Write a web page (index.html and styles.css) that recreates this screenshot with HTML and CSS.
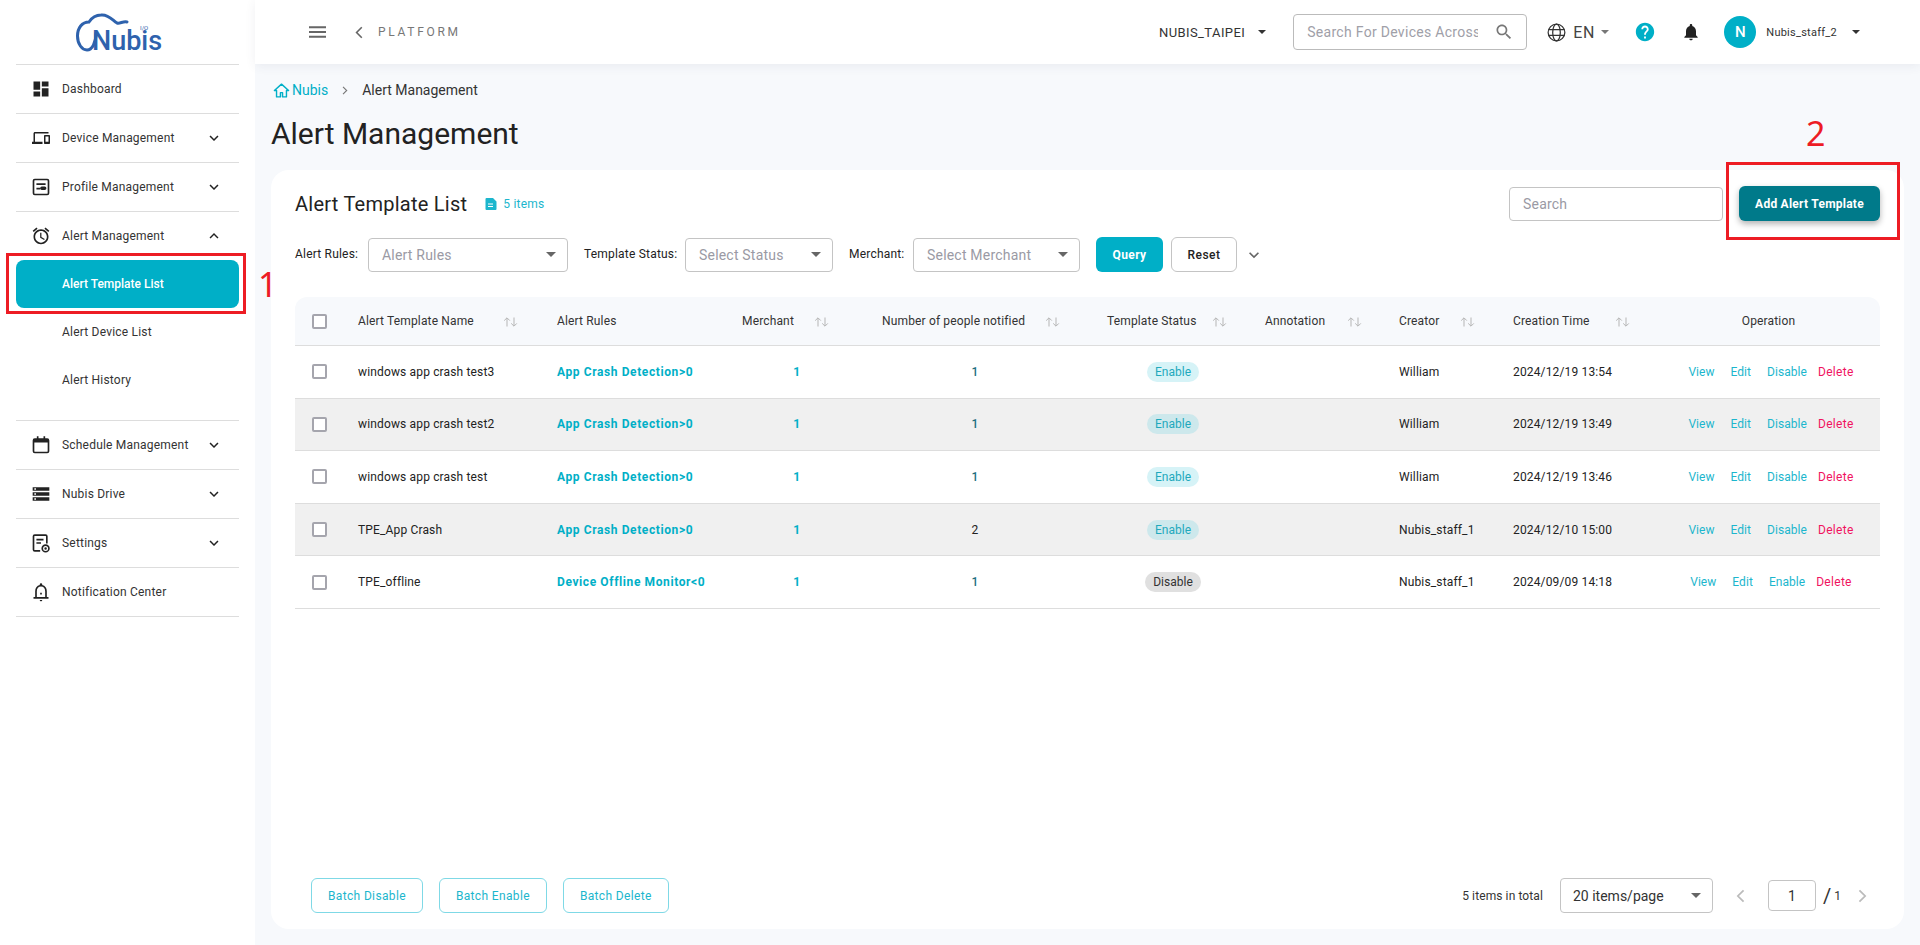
FILE: index.html
```html
<!DOCTYPE html>
<html lang="en">
<head>
<meta charset="utf-8">
<title>Alert Management</title>
<link rel="stylesheet" href="styles.css">
</head>
<body>
<svg class="defs" xmlns="http://www.w3.org/2000/svg">
  <symbol id="chev-down" viewBox="0 0 24 24"><path d="M7.41 8.59 12 13.17l4.59-4.58L18 10l-6 6-6-6z"/></symbol>
  <symbol id="chev-up" viewBox="0 0 24 24"><path d="M7.41 15.41 12 10.83l4.59 4.58L18 14l-6-6-6 6z"/></symbol>
  <symbol id="caret" viewBox="0 0 10 5"><path d="M0 0h10L5 5z"/></symbol>
  <symbol id="sort" viewBox="0 0 16 10"><path d="M4 9.500V1M1.200 3.600 4 .8l2.800 2.800M11 .5V9M8.200 6.400 11 9.200l2.800-2.800" fill="none" stroke="currentColor" stroke-width="1"/></symbol>
  <symbol id="left" viewBox="0 0 10 16"><path d="M8.500 1.500 2 8l6.500 6.500" fill="none" stroke="currentColor" stroke-width="2"/></symbol>
  <symbol id="right" viewBox="0 0 10 16"><path d="M1.500 1.500 8 8l-6.500 6.500" fill="none" stroke="currentColor" stroke-width="2"/></symbol>
</svg>

<div class="app">
  <aside class="sidebar">
    <div class="logo">
      <svg class="logo-cloud" viewBox="0 0 54 40"><path d="M51 9C47 8 44 11 41 10 37 8 33 1 25 2 19 2 15 6 13 9 6 9 1.500 15 1.500 23 1.500 31 6 37 11 37 16 37 20 30 20 20" fill="none" stroke="#2e62ad" stroke-width="3" stroke-linecap="round"/></svg>
      <span class="logo-text">Nubis</span>
      <span class="logo-io">I/O</span>
    </div>
    <nav class="nav">
      <a class="nav-item">
        <svg class="nav-icon" viewBox="0 0 24 24"><path d="M3 13h8V3H3v10zm0 8h8v-6H3v6zm10 0h8V11h-8v10zm0-18v6h8V3h-8z"/></svg>
        <span class="nav-label">Dashboard</span>
      </a>
      <a class="nav-item">
        <svg class="nav-icon nav-icon-wide" viewBox="0 0 24 24"><path d="M4 6h18V4H4c-1.100 0-2 .9-2 2v11H0v3h14v-3H4V6zm19 2h-6c-.55 0-1 .45-1 1v10c0 .55.45 1 1 1h6c.55 0 1-.45 1-1V9c0-.55-.45-1-1-1zm-1 9h-4v-7h4v7z"/></svg>
        <span class="nav-label">Device Management</span>
        <svg class="nav-chev"><use href="#chev-down"/></svg>
      </a>
      <a class="nav-item">
        <svg class="nav-icon" viewBox="0 0 24 24"><path fill-rule="evenodd" d="M4.500 2h15A2.500 2.500 0 0 1 22 4.500v15a2.500 2.500 0 0 1-2.500 2.500h-15A2.500 2.500 0 0 1 2 19.500v-15A2.500 2.500 0 0 1 4.500 2zm0 2a.5.5 0 0 0-.5.5v15a.5.5 0 0 0 .5.5h15a.5.5 0 0 0 .5-.5v-15a.5.5 0 0 0-.5-.5zM6.500 7.500h11v2h-11zm0 5.500H11v2H6.500zm6.500-1.500h3.500a2 2 0 0 1 0 4H13a2 2 0 0 1 0-4z"/></svg>
        <span class="nav-label">Profile Management</span>
        <svg class="nav-chev"><use href="#chev-down"/></svg>
      </a>
      <div class="nav-group">
        <a class="nav-item nav-item-open">
          <svg class="nav-icon" viewBox="0 0 24 24"><path d="M22 5.720l-4.600-3.860-1.290 1.530 4.600 3.860L22 5.720zM7.880 3.390 6.600 1.860 2 5.710l1.290 1.530 4.590-3.850zM12.500 8H11v6l4.750 2.850.75-1.230-4-2.370V8zM12 4c-4.970 0-9 4.030-9 9s4.030 9 9 9 9-4.030 9-9-4.030-9-9-9zm0 16c-3.870 0-7-3.130-7-7s3.130-7 7-7 7 3.130 7 7-3.130 7-7 7z"/></svg>
          <span class="nav-label">Alert Management</span>
          <svg class="nav-chev"><use href="#chev-up"/></svg>
        </a>
        <a class="nav-sub nav-sub-active">Alert Template List</a>
        <a class="nav-sub">Alert Device List</a>
        <a class="nav-sub">Alert History</a>
      </div>
      <a class="nav-item">
        <svg class="nav-icon" viewBox="0 0 24 24"><path d="M7 1.500h2V4h6V1.500h2V4h2.500A2.500 2.500 0 0 1 22 6.500v13a2.500 2.500 0 0 1-2.500 2.500h-15A2.500 2.500 0 0 1 2 19.500v-13A2.500 2.500 0 0 1 4.500 4H7zM4 9v10.500a.5.5 0 0 0 .5.5h15a.5.5 0 0 0 .5-.5V9z"/></svg>
        <span class="nav-label">Schedule Management</span>
        <svg class="nav-chev"><use href="#chev-down"/></svg>
      </a>
      <a class="nav-item">
        <svg class="nav-icon" viewBox="0 0 24 24"><path d="M2 20h20v-4H2v4zm2-3h2v2H4v-2zM2 4v4h20V4H2zm4 3H4V5h2v2zm-4 7h20v-4H2v4zm2-3h2v2H4v-2z"/></svg>
        <span class="nav-label">Nubis Drive</span>
        <svg class="nav-chev"><use href="#chev-down"/></svg>
      </a>
      <a class="nav-item">
        <svg class="nav-icon" viewBox="0 0 24 24"><path d="M4.500 1.500h13A2.500 2.500 0 0 1 20 4v8.500h-2V4a.5.5 0 0 0-.5-.5h-13A.5.5 0 0 0 4 4v16a.5.5 0 0 0 .5.5H11v2H4.500A2.500 2.500 0 0 1 2 20V4a2.500 2.500 0 0 1 2.500-2.500zM6.500 7H15v2H6.500zm0 4H12v2H6.500zM17.500 13.500a5 5 0 1 1 0 10 5 5 0 0 1 0-10zm0 2a3 3 0 1 0 0 6 3 3 0 0 0 0-6zm0 1.500a1.500 1.500 0 1 1 0 3 1.500 1.500 0 0 1 0-3z"/></svg>
        <span class="nav-label">Settings</span>
        <svg class="nav-chev"><use href="#chev-down"/></svg>
      </a>
      <a class="nav-item">
        <svg class="nav-icon" viewBox="0 0 24 24"><path d="M12 1.500a1.500 1.500 0 0 1 1.500 1.500v.7C17 4.600 19 7.500 19 11v7h2v2H3v-2h2v-7c0-3.500 2-6.400 5.500-7.300V3A1.500 1.500 0 0 1 12 1.500zM7 18h10v-7c0-3-2-5.500-5-5.500S7 8 7 11zm3.500 3.500h3c0 1-.7 1.500-1.500 1.500s-1.500-.5-1.500-1.500zM11 13h2v2h-2z"/></svg>
        <span class="nav-label">Notification Center</span>
      </a>
    </nav>
  </aside>

  <div class="main">
    <header class="topbar">
      <div class="topbar-left">
        <svg class="tb-menu" viewBox="0 0 18 12"><path d="M0 0h18v2H0zM0 5h18v2H0zM0 10h18v2H0z"/></svg>
        <svg class="tb-back"><use href="#left"/></svg>
        <span class="tb-platform">PLATFORM</span>
      </div>
      <div class="topbar-right">
        <span class="tb-merchant">NUBIS_TAIPEI</span>
        <svg class="tb-caret tb-caret-merchant"><use href="#caret"/></svg>
        <div class="tb-search">
          <span class="tb-search-text">Search For Devices Across</span>
          <svg class="tb-search-icon" viewBox="0 0 24 24"><path d="M15.500 14h-.79l-.28-.27C15.410 12.590 16 11.110 16 9.500 16 5.910 13.090 3 9.500 3S3 5.910 3 9.500 5.910 16 9.500 16c1.610 0 3.090-.59 4.230-1.570l.27.28v.79l5 4.990L20.490 19l-4.990-5zm-6 0C7.010 14 5 11.990 5 9.500S7.010 5 9.500 5 14 7.010 14 9.500 11.990 14 9.500 14z"/></svg>
        </div>
        <svg class="tb-globe" viewBox="0 0 20 20"><g fill="none" stroke="#333" stroke-width="1.300"><circle cx="10" cy="10" r="8.800"/><ellipse cx="10" cy="10" rx="4" ry="8.800"/><path d="M1.500 7h17M1.500 13h17"/></g></svg>
        <span class="tb-lang">EN</span>
        <svg class="tb-caret tb-caret-grey"><use href="#caret"/></svg>
        <svg class="tb-help" viewBox="0 0 24 24"><path d="M12 2C6.480 2 2 6.480 2 12s4.480 10 10 10 10-4.480 10-10S17.520 2 12 2zm1 17h-2v-2h2v2zm2.070-7.750-.9.920C13.450 12.900 13 13.500 13 15h-2v-.5c0-1.100.45-2.100 1.170-2.830l1.240-1.260c.37-.36.59-.86.59-1.410 0-1.100-.9-2-2-2s-2 .9-2 2H8c0-2.210 1.790-4 4-4s4 1.790 4 4c0 .88-.36 1.680-.93 2.250z"/></svg>
        <svg class="tb-bell" viewBox="0 0 24 24"><path d="M12 22c1.100 0 2-.9 2-2h-4c0 1.100.89 2 2 2zm6-6v-5c0-3.070-1.640-5.640-4.500-6.320V4c0-.83-.67-1.500-1.500-1.500s-1.500.67-1.500 1.500v.68C7.630 5.360 6 7.920 6 11v5l-2 2v1h16v-1l-2-2z"/></svg>
        <span class="tb-avatar">N</span>
        <span class="tb-user">Nubis_staff_2</span>
        <svg class="tb-caret tb-caret-user"><use href="#caret"/></svg>
      </div>
    </header>

    <div class="content">
      <div class="crumbs">
        <svg class="crumb-home" viewBox="0 0 24 24"><path d="M12 3 2 12h3v9h5.500v-6h3v6H19v-9h3z" fill="none" stroke="#00afc7" stroke-width="2" stroke-linejoin="round"/></svg>
        <span class="crumb-link">Nubis</span>
        <svg class="crumb-sep"><use href="#right"/></svg>
        <span class="crumb-current">Alert Management</span>
      </div>
      <h1 class="page-title">Alert Management</h1>

      <section class="card">
        <div class="card-head">
          <h2 class="card-title">Alert Template List</h2>
          <svg class="doc-icon" viewBox="0 0 12 12"><path d="M1.500 0H8l3.500 3.500V11a1 1 0 0 1-1 1h-9a1 1 0 0 1-1-1V1a1 1 0 0 1 1-1zM3 5.500v1h5v-1zM3 8v1h5V8z" fill-rule="evenodd"/></svg>
          <span class="doc-count">5 items</span>
          <div class="card-actions">
            <div class="field field-search"><span class="placeholder">Search</span></div>
            <button class="btn-add">Add Alert Template</button>
          </div>
        </div>

        <div class="filters">
          <label class="filter-label lbl-rules">Alert Rules:</label>
          <div class="field field-rules"><span class="placeholder">Alert Rules</span><svg class="select-caret"><use href="#caret"/></svg></div>
          <label class="filter-label filter-next lbl-status">Template Status:</label>
          <div class="field field-status"><span class="placeholder">Select Status</span><svg class="select-caret"><use href="#caret"/></svg></div>
          <label class="filter-label filter-next lbl-merchant">Merchant:</label>
          <div class="field field-merchant"><span class="placeholder">Select Merchant</span><svg class="select-caret"><use href="#caret"/></svg></div>
          <button class="btn-query">Query</button>
          <button class="btn-reset">Reset</button>
          <svg class="filter-more"><use href="#chev-down"/></svg>
        </div>

        <div class="table">
          <div class="row row-head">
            <div class="cell cell-check"><span class="check"></span></div>
            <div class="cell hd-name">Alert Template Name<svg class="sort s-name"><use href="#sort"/></svg></div>
            <div class="cell hd-rules">Alert Rules</div>
            <div class="cell hd-merchant">Merchant<svg class="sort s-merchant"><use href="#sort"/></svg></div>
            <div class="cell hd-people">Number of people notified<svg class="sort s-people"><use href="#sort"/></svg></div>
            <div class="cell hd-status">Template Status<svg class="sort s-status"><use href="#sort"/></svg></div>
            <div class="cell hd-annot">Annotation<svg class="sort s-annot"><use href="#sort"/></svg></div>
            <div class="cell hd-creator">Creator<svg class="sort s-creator"><use href="#sort"/></svg></div>
            <div class="cell hd-time">Creation Time<svg class="sort s-time"><use href="#sort"/></svg></div>
            <div class="cell cell-center">Operation</div>
          </div>

          <div class="row">
            <div class="cell cell-check"><span class="check"></span></div>
            <div class="cell cell-pad">windows app crash test3</div>
            <div class="cell cell-pad link-strong">App Crash Detection&gt;0</div>
            <div class="cell cell-center link-strong">1</div>
            <div class="cell cell-center link-num">1</div>
            <div class="cell cell-center"><span class="badge badge-on">Enable</span></div>
            <div class="cell"></div>
            <div class="cell cell-pad">William</div>
            <div class="cell cell-pad">2024/12/19 13:54</div>
            <div class="cell cell-center ops"><a class="op">View</a><a class="op">Edit</a><a class="op">Disable</a><a class="op op-del">Delete</a></div>
          </div>
          <div class="row row-alt">
            <div class="cell cell-check"><span class="check"></span></div>
            <div class="cell cell-pad">windows app crash test2</div>
            <div class="cell cell-pad link-strong">App Crash Detection&gt;0</div>
            <div class="cell cell-center link-strong">1</div>
            <div class="cell cell-center link-num">1</div>
            <div class="cell cell-center"><span class="badge badge-on">Enable</span></div>
            <div class="cell"></div>
            <div class="cell cell-pad">William</div>
            <div class="cell cell-pad">2024/12/19 13:49</div>
            <div class="cell cell-center ops"><a class="op">View</a><a class="op">Edit</a><a class="op">Disable</a><a class="op op-del">Delete</a></div>
          </div>
          <div class="row">
            <div class="cell cell-check"><span class="check"></span></div>
            <div class="cell cell-pad">windows app crash test</div>
            <div class="cell cell-pad link-strong">App Crash Detection&gt;0</div>
            <div class="cell cell-center link-strong">1</div>
            <div class="cell cell-center link-num">1</div>
            <div class="cell cell-center"><span class="badge badge-on">Enable</span></div>
            <div class="cell"></div>
            <div class="cell cell-pad">William</div>
            <div class="cell cell-pad">2024/12/19 13:46</div>
            <div class="cell cell-center ops"><a class="op">View</a><a class="op">Edit</a><a class="op">Disable</a><a class="op op-del">Delete</a></div>
          </div>
          <div class="row row-alt">
            <div class="cell cell-check"><span class="check"></span></div>
            <div class="cell cell-pad">TPE_App Crash</div>
            <div class="cell cell-pad link-strong">App Crash Detection&gt;0</div>
            <div class="cell cell-center link-strong">1</div>
            <div class="cell cell-center">2</div>
            <div class="cell cell-center"><span class="badge badge-on">Enable</span></div>
            <div class="cell"></div>
            <div class="cell cell-pad">Nubis_staff_1</div>
            <div class="cell cell-pad">2024/12/10 15:00</div>
            <div class="cell cell-center ops"><a class="op">View</a><a class="op">Edit</a><a class="op">Disable</a><a class="op op-del">Delete</a></div>
          </div>
          <div class="row">
            <div class="cell cell-check"><span class="check"></span></div>
            <div class="cell cell-pad">TPE_offline</div>
            <div class="cell cell-pad link-strong">Device Offline Monitor&lt;0</div>
            <div class="cell cell-center link-strong">1</div>
            <div class="cell cell-center link-num">1</div>
            <div class="cell cell-center"><span class="badge badge-off">Disable</span></div>
            <div class="cell"></div>
            <div class="cell cell-pad">Nubis_staff_1</div>
            <div class="cell cell-pad">2024/09/09 14:18</div>
            <div class="cell cell-center ops"><a class="op">View</a><a class="op">Edit</a><a class="op">Enable</a><a class="op op-del">Delete</a></div>
          </div>
        </div>

        <div class="card-foot">
          <button class="btn-batch">Batch Disable</button>
          <button class="btn-batch">Batch Enable</button>
          <button class="btn-batch">Batch Delete</button>
          <div class="pager">
            <span class="pager-total">5 items in total</span>
            <div class="field field-size"><span class="size-text">20 items/page</span><svg class="select-caret"><use href="#caret"/></svg></div>
            <svg class="pager-arrow pager-prev"><use href="#left"/></svg>
            <div class="pager-input">1</div>
            <span class="pager-slash">/</span>
            <span class="pager-pages">1</span>
            <svg class="pager-arrow pager-next"><use href="#right"/></svg>
          </div>
        </div>
      </section>
    </div>
  </div>

  <div class="mark mark-1"></div>
  <div class="mark mark-2"></div>
  <span class="mark-num mark-num-1">1</span>
  <span class="mark-num mark-num-2">2</span>
</div>
</body>
</html>
```

FILE: styles.css
```css
* { box-sizing: border-box; }
html, body { margin: 0; height: 100%; }
body { font-family: Roboto, "Liberation Sans", Arial, sans-serif; font-size: 12px; color: #333; background: #f7f9fc; overflow: hidden; }
.defs { display: none; }
button { font-family: inherit; cursor: pointer; }
h1, h2 { margin: 0; font-weight: 400; }

.app { position: relative; display: flex; width: 1920px; height: 945px; }

/* Sidebar */
.sidebar { width: 255px; flex: none; background: #fff; padding: 0 16px; }
.logo { position: relative; height: 65px; border-bottom: 1px solid #ddd; }
.logo-cloud { position: absolute; left: 60px; top: 13px; width: 54px; height: 40px; }
.logo-text { position: absolute; left: 76px; top: 32px; font-size: 27px; line-height: 18px; font-weight: 500; color: #2e62ad; }
.logo-io { position: absolute; left: 124px; top: 25px; font-size: 6px; line-height: 6px; color: #2e62ad; }
.nav-item { display: flex; align-items: center; height: 49px; padding-left: 15px; border-bottom: 1px solid #ddd; }
.nav-item-open { border-bottom: 0; height: 48px; }
.nav-icon { width: 20px; height: 20px; flex: none; fill: #222; }
.nav-icon-wide { width: 18px; height: 18px; margin-left: 1px; margin-right: 1px; }
.nav-label { margin-left: 11px; font-size: 12px; letter-spacing: 0.2px; color: #333; }
.nav-chev { width: 18px; height: 18px; margin-left: auto; margin-right: 16px; fill: #222; }
.nav-group { border-bottom: 1px solid #ddd; padding-bottom: 16px; }
.nav-sub { display: block; height: 48px; line-height: 49px; padding-left: 46px; font-size: 12px; letter-spacing: 0.2px; border-radius: 8px; color: #333; }
.nav-sub-active { background: #00afc7; color: #fff; font-weight: 500; letter-spacing: 0; line-height: 48px; }

/* Main column */
.main { flex: 1; min-width: 0; display: flex; flex-direction: column; }
.topbar { height: 64px; flex: none; background: #fff; box-shadow: 0 2px 10px rgba(60, 70, 90, 0.08); display: flex; align-items: center; justify-content: space-between; padding-left: 54px; padding-right: 60px; }
.topbar-left, .topbar-right { display: flex; align-items: center; }
.tb-menu { width: 17px; height: 12px; fill: #666; }
.tb-back { width: 8px; height: 13px; margin-left: 29px; color: #666; }
.tb-platform { margin-left: 15px; font-size: 12px; letter-spacing: 2.7px; color: #777; }
.tb-merchant { font-size: 13px; letter-spacing: 0.4px; color: #333; }
.tb-caret { width: 8px; height: 4px; margin-left: 15px; fill: #333; }
.tb-caret-merchant { margin-left: 13px; }
.tb-search { display: flex; align-items: center; width: 234px; height: 36px; margin-left: 27px; padding: 0 12px 0 13px; border: 1px solid #bbb; border-radius: 4px; background: #fff; }
.tb-search-text { width: 171px; overflow: hidden; white-space: nowrap; font-size: 14px; color: #a0a0a8; letter-spacing: 0.3px; }
.tb-search-icon { width: 20px; height: 20px; margin-left: auto; fill: #777; }
.tb-globe { width: 19px; height: 19px; margin-left: 20px; }
.tb-lang { margin-left: 7px; font-size: 16px; letter-spacing: 0.8px; color: #444; }
.tb-caret-grey { margin-left: 6px; fill: #777; }
.tb-help { width: 22px; height: 22px; margin-left: 25px; fill: #00afc7; }
.tb-bell { width: 20px; height: 20px; margin-left: 25px; fill: #222; }
.tb-avatar { width: 32px; height: 32px; margin-left: 23px; border-radius: 50%; background: #00afc7; color: #fff; font-size: 15px; font-weight: 500; display: flex; align-items: center; justify-content: center; }
.tb-user { margin-left: 10px; font-size: 11px; letter-spacing: 0.25px; color: #333; }
.tb-caret-user { margin-left: 15px; }

.content { flex: 1; min-height: 0; display: flex; flex-direction: column; padding: 0 16px 16px; }
.crumbs { display: flex; align-items: center; height: 18px; margin-top: 17px; font-size: 14px; padding-left: 2px; }
.crumb-home { width: 17px; height: 17px; flex: none; }
.crumb-link { margin-left: 2px; color: #00afc7; }
.crumb-sep { width: 6px; height: 9px; margin-left: 14px; color: #777; }
.crumb-current { margin-left: 14px; color: #333; }
.page-title { margin-top: 15px; font-size: 30px; line-height: 40px; color: #222; }
.card { flex: 1; min-height: 0; margin-top: 16px; background: #fff; border-radius: 18px; padding: 16px 24px; display: flex; flex-direction: column; }
.card-head { display: flex; align-items: center; height: 35px; }
.card-title { font-size: 20px; letter-spacing: 0.25px; color: #222; }
.doc-icon { width: 12px; height: 12px; margin-left: 18px; fill: #1cb6cd; }
.doc-count { margin-left: 6px; font-size: 12px; letter-spacing: 0.2px; color: #1cb6cd; }
.card-actions { margin-left: auto; display: flex; align-items: center; }
.field { display: flex; align-items: center; height: 34px; padding: 0 11px 0 13px; background: #fff; border: 1px solid #c4c4c4; border-radius: 4px; }
.placeholder { font-size: 14px; color: #9a9aa4; letter-spacing: 0.2px; white-space: nowrap; }
.field-search { width: 214px; }
.btn-add { width: 141px; height: 35px; margin-left: 16px; border: 0; border-radius: 6px; background: #007a8a; color: #fff; font-size: 12px; font-weight: 700; letter-spacing: 0.25px; box-shadow: 0 3px 6px rgba(0, 0, 0, 0.3); }

.filters { display: flex; align-items: center; height: 35px; margin-top: 16px; }
.filter-label { flex: none; font-size: 12px; letter-spacing: 0.2px; color: #222; transform: translateY(-1px); white-space: nowrap; }
.lbl-rules { width: 65px; }
.lbl-status { width: 93px; }
.lbl-merchant { width: 56px; }
.filter-next { margin-left: 16px; }
.filters .field { margin-left: 8px; }
.field-rules { width: 200px; }
.field-status { width: 148px; }
.field-merchant { width: 167px; }
.select-caret { width: 10px; height: 5px; margin-left: auto; fill: #666; }
.btn-query { width: 67px; height: 35px; margin-left: 16px; border: 0; border-radius: 6px; background: #00afc7; color: #fff; font-size: 12px; font-weight: 700; letter-spacing: 0.4px; }
.btn-reset { width: 66px; height: 35px; margin-left: 8px; background: #fff; border: 1px solid #c4c4c4; border-radius: 6px; color: #222; font-size: 12px; font-weight: 500; letter-spacing: 0.5px; }
.filter-more { width: 20px; height: 20px; margin-left: 7px; fill: #666; }

/* Table */
.table { margin-top: 25px; letter-spacing: 0.15px; }
.row { display: grid; grid-template-columns: 47px 199px 185px 142px 214px 182px 119px 114px 160px 223px; height: 52.6px; border-bottom: 1px solid #ddd; color: #222; }
.row-head { height: 49px; background: #f7f9fc; border-radius: 12px 12px 0 0; color: #333; }
.row-alt { background: #f0f0f0; }
.cell { display: flex; align-items: center; position: relative; min-width: 0; white-space: nowrap; }
.cell-check { justify-content: flex-start; padding-left: 17px; }
.check { width: 15px; height: 15px; background: #fff; border: 2px solid #a5a5ad; border-radius: 2px; }
.cell-pad { padding-left: 16px; }
.cell-center { justify-content: center; }
.link-strong { color: #00afc7; font-weight: 700; letter-spacing: 0.6px; }
.link-num { color: #1f6f80; font-weight: 500; }
.hd-name, .hd-rules, .hd-merchant, .hd-creator, .hd-time { padding-left: 16px; }
.hd-people { padding-left: 14px; }
.hd-status { padding-left: 25px; }
.hd-annot { padding-left: 1px; }
.sort { width: 16px; height: 10px; color: #b5b5b5; flex: none; margin-top: 2px; }
.s-name { margin-left: 29px; }
.s-merchant { margin-left: 20px; }
.s-people { margin-left: 20px; }
.s-status { margin-left: 16px; }
.s-annot { margin-left: 22px; }
.s-creator { margin-left: 21px; }
.s-time { margin-left: 25px; }
.badge { display: inline-flex; align-items: center; height: 20px; padding: 0 8px; border-radius: 10px; font-size: 12px; letter-spacing: 0; }
.badge-on { background: #d6f3f7; color: #1fa9bd; }
.row-alt .badge-on { background: #cde8ec; }
.badge-off { background: #e0e0e0; color: #333; }
.ops { letter-spacing: 0.05px; padding-left: 5px; }
.op { color: #1cb6cd; margin: 0 8px; }
.op-del { color: #f0135f; margin-left: 3px; letter-spacing: 0.3px; }

/* Footer */
.card-foot { margin-top: auto; display: flex; align-items: center; height: 35px; padding-left: 16px; }
.btn-batch { height: 35px; padding: 0 16px; margin-right: 16px; background: #fff; border: 1px solid #7fd9e6; border-radius: 6px; color: #1cb6cd; font-size: 12px; letter-spacing: 0.35px; }
.pager { margin-left: auto; display: flex; align-items: center; }
.pager-total { font-size: 12px; letter-spacing: 0.1px; color: #333; }
.field-size { width: 153px; height: 35px; margin-left: 17px; padding-left: 12px; }
.size-text { font-size: 14px; color: #333; }
.pager-arrow { width: 9px; height: 14px; color: #bbb; }
.pager-prev { margin-left: 23px; }
.pager-input { width: 48px; height: 31px; margin-left: 23px; border: 1px solid #c4c4c4; border-radius: 4px; display: flex; align-items: center; justify-content: center; font-size: 14px; color: #333; }
.pager-slash { margin-left: 7px; font-size: 20px; color: #333; }
.pager-pages { margin-left: 3px; font-size: 12px; color: #333; }
.pager-next { margin-left: 17px; margin-right: 13px; }

/* Annotation overlays */
.mark { position: absolute; border: 3px solid #ed1c24; pointer-events: none; }
.mark-1 { left: 6px; top: 253px; width: 240px; height: 61px; }
.mark-2 { left: 1726px; top: 162px; width: 174px; height: 78px; }
.mark-num { position: absolute; font-family: "Noto Sans", sans-serif; font-size: 34px; line-height: 40px; color: #ed1c24; }
.mark-num-1 { left: 258px; top: 264px; }
.mark-num-2 { left: 1806px; top: 113px; }
```
